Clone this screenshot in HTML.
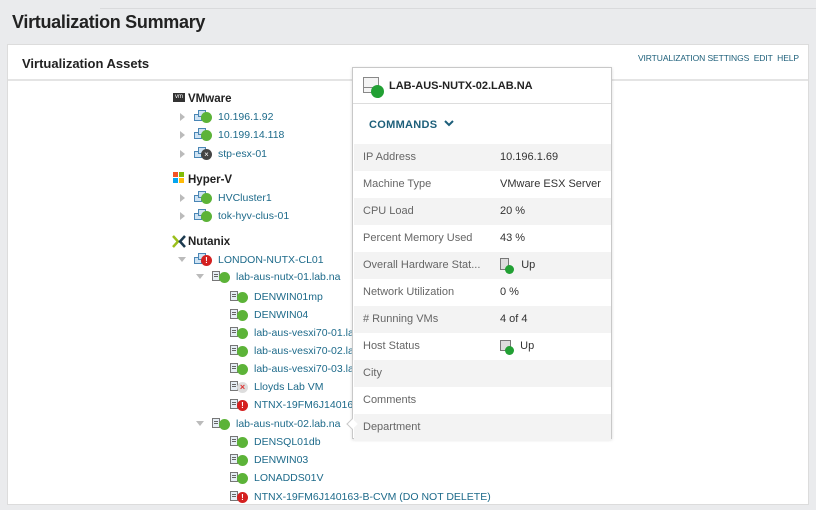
<!DOCTYPE html>
<html><head><meta charset="utf-8"><style>
*{margin:0;padding:0;box-sizing:border-box}
body{width:816px;height:510px;background:#eaebed;font-family:"Liberation Sans",sans-serif;position:relative;overflow:hidden}
.t{position:absolute;left:12px;top:12px;font-size:18px;font-weight:bold;color:#222;letter-spacing:-0.3px}
.topline{position:absolute;left:100px;top:8px;width:716px;height:1px;background:#d9dadc}
.panel{position:absolute;left:7px;top:44px;width:802px;height:461px;background:#fff;border:1px solid #dcdcdc}
.ph{position:absolute;left:0;top:0;width:100%;height:36px;border-bottom:2px solid #e4e4e4}
.ph b{position:absolute;left:14px;top:11px;font-size:13px;color:#222}
.links{position:absolute;right:9px;top:8px;font-size:8.5px;color:#1d5f7a;letter-spacing:-0.1px}
.r{position:absolute;height:18px;line-height:18px;font-size:10.5px;color:#1d6a8a;white-space:nowrap}
.g{position:absolute;font-size:11.5px;font-weight:bold;color:#222;height:18px;line-height:18px}
.ar{position:absolute;width:0;height:0}
.ar.c{border-left:5px solid #bbb;border-top:4px solid transparent;border-bottom:4px solid transparent}
.ar.o{border-top:5px solid #bbb;border-left:4px solid transparent;border-right:4px solid transparent}
.ic{position:relative;display:inline-block;width:25px;height:18px;vertical-align:top}
.h1,.h2{position:absolute;width:8px;height:7px;border:1px solid #4a86b5;background:#cfe3f3}
.h1{left:1px;top:6px}.h2{left:5px;top:2px}
.d{position:absolute;left:1px;top:3px;width:8px;height:10px;border:1px solid #777;background:#e6eef5}
.d:after{content:"";position:absolute;left:1px;top:2px;width:4px;height:1px;background:#666;box-shadow:0 2px 0 #666}
.b{position:absolute;left:8px;top:4px;width:11px;height:11px;border-radius:50%;background:#5cb338}
.b.e{background:#d42020;color:#fff;font-size:8px;font-weight:bold;line-height:11px;text-align:center}
.b.x{background:#444;color:#fff;font-size:8px;line-height:11px;text-align:center}
.b.m{background:#ddd;color:#d33;font-size:9px;line-height:11px;text-align:center;font-weight:bold}
.pop{position:absolute;left:352px;top:67px;width:260px;height:372px;background:#fff;border:1px solid #c8c8c8;box-shadow:0 1px 3px rgba(0,0,0,.15)}
.pt{position:absolute;left:0;top:0;width:100%;height:36px;border-bottom:1px solid #ddd}
.pt b{position:absolute;left:36px;top:12px;font-size:11px;color:#222}
.cmd{position:absolute;left:16px;top:51px;font-size:11px;font-weight:bold;color:#1d5f7a;letter-spacing:0.3px}
.row{position:absolute;left:1px;width:257px;height:27px;line-height:27px;font-size:11px;color:#666}
.row.s{background:#f3f3f3}
.row span{position:absolute;left:9px}
.row i{position:absolute;left:146px;font-style:normal;color:#333}
</style></head><body>
<div class="topline"></div>
<div class="t">Virtualization Summary</div>
<div class="panel">
<div class="ph"><b>Virtualization Assets</b><div class="links">VIRTUALIZATION SETTINGS&nbsp; EDIT&nbsp; HELP</div></div>
</div>

<div style="position:absolute;left:173px;top:93px;width:12px;height:9px;background:#333;color:#fff;font-size:6px;line-height:9px;text-align:center">vm</div>
<div class="g" style="left:188px;top:90px">VMware</div>
<div style="position:absolute;left:173px;top:172px;width:5px;height:5px;background:#f35325"></div>
<div style="position:absolute;left:179px;top:172px;width:5px;height:5px;background:#81bc06"></div>
<div style="position:absolute;left:173px;top:178px;width:5px;height:5px;background:#05a6f0"></div>
<div style="position:absolute;left:179px;top:178px;width:5px;height:5px;background:#ffba08"></div>
<div class="g" style="left:188px;top:171px">Hyper-V</div>
<svg style="position:absolute;left:172px;top:235px" width="14" height="13" viewBox="0 0 14 13"><path d="M1 1l5 5.5L1 12" stroke="#9bbf1c" stroke-width="2.5" fill="none"/><path d="M13 1L8 6.5 13 12" stroke="#1d3b4f" stroke-width="2.5" fill="none"/></svg>
<div class="g" style="left:188px;top:233px">Nutanix</div>

<div class="ar c" style="left:180px;top:113px"></div>
<div class="r" style="left:193px;top:108px"><span class="ic"><span class="h1"></span><span class="h2"></span><span class="b"></span></span>10.196.1.92</div>
<div class="ar c" style="left:180px;top:131px"></div>
<div class="r" style="left:193px;top:126px"><span class="ic"><span class="h1"></span><span class="h2"></span><span class="b"></span></span>10.199.14.118</div>
<div class="ar c" style="left:180px;top:150px"></div>
<div class="r" style="left:193px;top:145px"><span class="ic"><span class="h1"></span><span class="h2"></span><span class="b x">×</span></span>stp-esx-01</div>
<div class="ar c" style="left:180px;top:194px"></div>
<div class="r" style="left:193px;top:189px"><span class="ic"><span class="h1"></span><span class="h2"></span><span class="b"></span></span>HVCluster1</div>
<div class="ar c" style="left:180px;top:212px"></div>
<div class="r" style="left:193px;top:207px"><span class="ic"><span class="h1"></span><span class="h2"></span><span class="b"></span></span>tok-hyv-clus-01</div>
<div class="ar o" style="left:178px;top:257px"></div>
<div class="r" style="left:193px;top:251px"><span class="ic"><span class="h1"></span><span class="h2"></span><span class="b e">!</span></span>LONDON-NUTX-CL01</div>
<div class="ar o" style="left:196px;top:274px"></div>
<div class="r" style="left:211px;top:268px"><span class="ic"><span class="d"></span><span class="b"></span></span>lab-aus-nutx-01.lab.na</div>
<div class="r" style="left:229px;top:288px"><span class="ic"><span class="d"></span><span class="b"></span></span>DENWIN01mp</div>
<div class="r" style="left:229px;top:306px"><span class="ic"><span class="d"></span><span class="b"></span></span>DENWIN04</div>
<div class="r" style="left:229px;top:324px"><span class="ic"><span class="d"></span><span class="b"></span></span>lab-aus-vesxi70-01.lab</div>
<div class="r" style="left:229px;top:342px"><span class="ic"><span class="d"></span><span class="b"></span></span>lab-aus-vesxi70-02.lab</div>
<div class="r" style="left:229px;top:360px"><span class="ic"><span class="d"></span><span class="b"></span></span>lab-aus-vesxi70-03.lab</div>
<div class="r" style="left:229px;top:378px"><span class="ic"><span class="d"></span><span class="b m">×</span></span>Lloyds Lab VM</div>
<div class="r" style="left:229px;top:396px"><span class="ic"><span class="d"></span><span class="b e">!</span></span>NTNX-19FM6J140163-A</div>
<div class="ar o" style="left:196px;top:421px"></div>
<div class="r" style="left:211px;top:415px"><span class="ic"><span class="d"></span><span class="b"></span></span>lab-aus-nutx-02.lab.na</div>
<div class="r" style="left:229px;top:433px"><span class="ic"><span class="d"></span><span class="b"></span></span>DENSQL01db</div>
<div class="r" style="left:229px;top:451px"><span class="ic"><span class="d"></span><span class="b"></span></span>DENWIN03</div>
<div class="r" style="left:229px;top:469px"><span class="ic"><span class="d"></span><span class="b"></span></span>LONADDS01V</div>
<div class="r" style="left:229px;top:488px"><span class="ic"><span class="d"></span><span class="b e">!</span></span>NTNX-19FM6J140163-B-CVM (DO NOT DELETE)</div>

<div class="pop">
<div class="pt">
<div style="position:absolute;left:10px;top:9px;width:16px;height:16px;border:1px solid #888;background:#f4f4f4"></div>
<div style="position:absolute;left:10px;top:19px;width:10px;height:1px;background:#888"></div>
<div style="position:absolute;left:18px;top:17px;width:13px;height:13px;border-radius:50%;background:#22a034"></div>
<b>LAB-AUS-NUTX-02.LAB.NA</b></div>
<div class="cmd">COMMANDS &nbsp;<svg width="10" height="7" viewBox="0 0 10 7" style="vertical-align:1px"><path d="M1 1l4 4 4-4" stroke="#1d5f7a" stroke-width="2" fill="none"/></svg></div>
<div class="row s" style="top:76px"><span>IP Address</span><i>10.196.1.69</i></div>
<div class="row" style="top:103px"><span>Machine Type</span><i>VMware ESX Server</i></div>
<div class="row s" style="top:130px"><span>CPU Load</span><i>20 %</i></div>
<div class="row" style="top:157px"><span>Percent Memory Used</span><i>43 %</i></div>
<div class="row s" style="top:184px"><span>Overall Hardware Stat...</span><i><b style="display:inline-block;width:9px;height:12px;border:1px solid #777;background:#ddd;vertical-align:-2px;position:relative"><b style="position:absolute;left:4px;top:6px;width:9px;height:9px;border-radius:50%;background:#22a034"></b></b>&nbsp;&nbsp;&nbsp; Up</i></div>
<div class="row" style="top:211px"><span>Network Utilization</span><i>0 %</i></div>
<div class="row s" style="top:238px"><span>#&nbsp;Running VMs</span><i>4 of 4</i></div>
<div class="row" style="top:265px"><span>Host Status</span><i><b style="display:inline-block;width:11px;height:11px;border:1px solid #777;background:#ddd;vertical-align:-2px;position:relative"><b style="position:absolute;left:4px;top:5px;width:9px;height:9px;border-radius:50%;background:#22a034"></b></b>&nbsp;&nbsp; Up</i></div>
<div class="row s" style="top:292px"><span>City</span></div>
<div class="row" style="top:319px"><span>Comments</span></div>
<div class="row s" style="top:346px"><span>Department</span></div>
</div>
<div style="position:absolute;left:348px;top:420px;width:8px;height:8px;background:#fff;border-left:1px solid #c8c8c8;border-bottom:1px solid #c8c8c8;transform:rotate(45deg)"></div>
</body></html>
